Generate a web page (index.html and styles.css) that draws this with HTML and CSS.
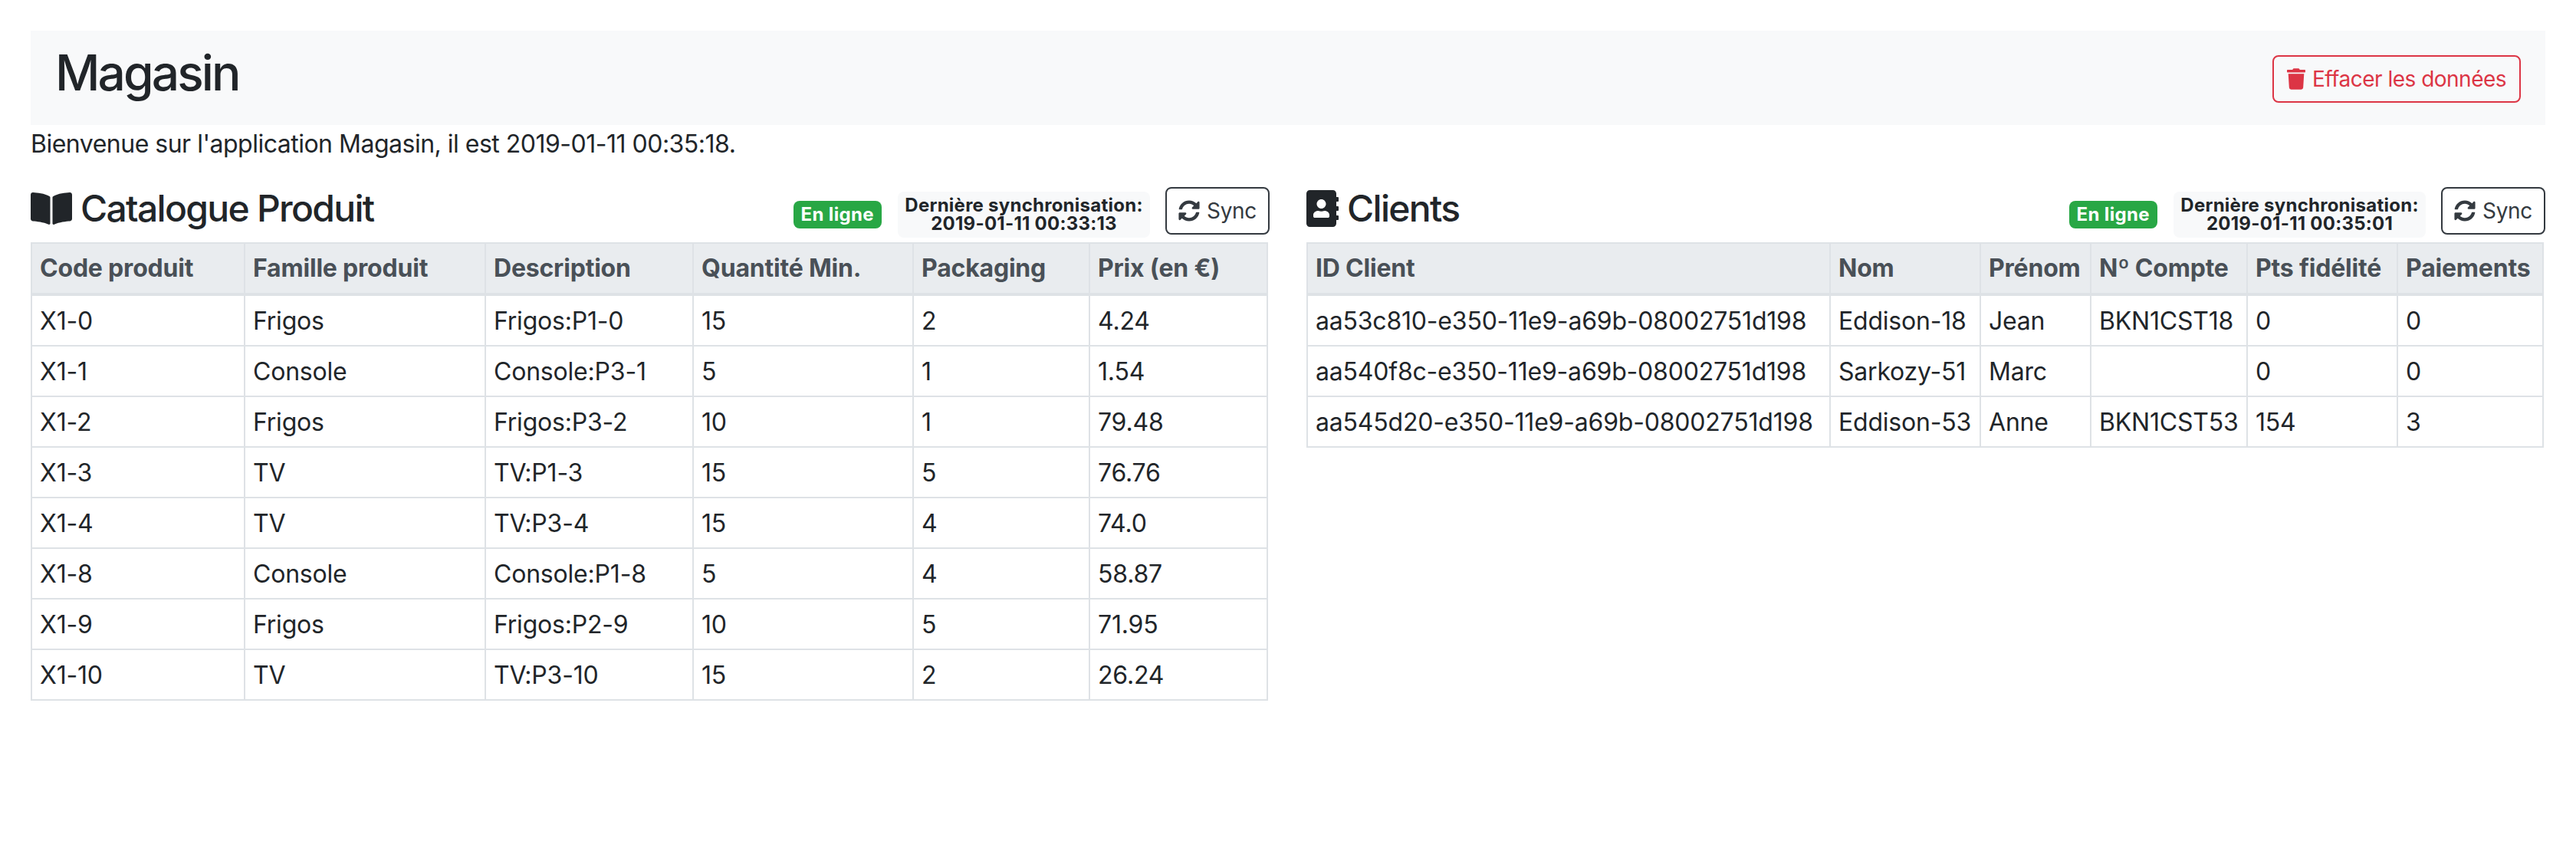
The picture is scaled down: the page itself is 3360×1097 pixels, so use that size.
FILE: index.html
```html
<!DOCTYPE html>
<html lang="fr">
<head>
    <meta charset="UTF-8">
    <meta name="viewport" content="width=device-width, initial-scale=1.0">
    <title>Magasin</title>
    <link rel="stylesheet" href="styles.css">
</head>
<body>
    <header class="topbar">
        <h1 class="brand">Magasin</h1>
        <button type="button" class="btn btn-danger">
            <svg class="icon icon-trash" viewBox="0 0 448 512"><path fill="currentColor" d="M432 32H312l-9.4-18.7A24 24 0 0 0 281.1 0H166.8a23.72 23.72 0 0 0-21.4 13.3L136 32H16A16 16 0 0 0 0 48v32a16 16 0 0 0 16 16h416a16 16 0 0 0 16-16V48a16 16 0 0 0-16-16zM53.2 467a48 48 0 0 0 47.9 45h245.8a48 48 0 0 0 47.9-45L416 128H32z"/></svg>
            Effacer les données
        </button>
    </header>
    <p class="welcome">Bienvenue sur l'application Magasin, il est 2019-01-11 00:35:18.</p>

    <main class="panels">
        <section class="panel">
            <div class="panel-head">
                <h2 class="panel-title">
                    <svg class="title-icon icon-book" viewBox="0 0 576 512"><path fill="currentColor" d="M542.22 32.05c-54.8 3.11-163.72 14.43-230.96 55.59-4.64 2.84-7.27 7.89-7.27 13.17v363.87c0 11.55 12.63 18.85 23.28 13.49 69.18-34.82 169.23-44.32 218.7-46.92 16.89-.89 30.02-14.43 30.02-30.66V62.75c.01-17.71-15.35-31.74-33.77-30.7zM264.73 87.64C197.5 46.48 88.58 35.17 33.78 32.05 15.36 31.01 0 45.04 0 62.75V400.6c0 16.24 13.13 29.78 30.02 30.66 49.49 2.6 149.59 12.11 218.77 46.95 10.62 5.35 23.21-1.94 23.21-13.46V100.63c0-5.29-2.62-10.14-7.27-12.99z"/></svg>
                    Catalogue Produit
                </h2>
                <span class="badge">En ligne</span>
                <div class="last-sync">Dernière synchronisation:<br>2019-01-11 00:33:13</div>
                <button type="button" class="btn btn-sync">
                    <svg class="icon icon-sync" viewBox="0 0 512 512"><path fill="currentColor" d="M370.72 133.28C339.458 104.008 298.888 87.962 255.848 88c-77.458.068-144.328 53.178-162.791 126.85-1.344 5.363-6.122 9.15-11.651 9.15H24.103c-7.498 0-13.194-6.807-11.807-14.176C33.933 94.924 134.813 8 256 8c66.448 0 126.791 26.136 171.315 68.685L463.03 40.97C478.149 25.851 504 36.559 504 57.941V192c0 13.255-10.745 24-24 24H345.941c-21.382 0-32.09-25.851-16.971-40.971l41.75-41.749zM32 296h134.059c21.382 0 32.09 25.851 16.971 40.971l-41.75 41.75c31.262 29.273 71.835 45.319 114.876 45.28 77.418-.07 144.315-53.144 162.787-126.849 1.344-5.363 6.122-9.15 11.651-9.15h57.304c7.498 0 13.194 6.807 11.807 14.176C478.067 417.076 377.187 504 256 504c-66.448 0-126.791-26.136-171.315-68.685L48.97 471.03C33.851 486.149 8 475.441 8 454.059V320c0-13.255 10.745-24 24-24z"/></svg>
                    Sync
                </button>
            </div>
            <table class="data-table">
                <colgroup>
                    <col class="p1"><col class="p2"><col class="p3"><col class="p4"><col class="p5"><col class="p6">
                </colgroup>
                <thead>
                    <tr><th>Code produit</th><th>Famille produit</th><th>Description</th><th>Quantité Min.</th><th>Packaging</th><th>Prix (en €)</th></tr>
                </thead>
                <tbody>
                    <tr><td>X1-0</td><td>Frigos</td><td>Frigos:P1-0</td><td>15</td><td>2</td><td>4.24</td></tr>
                    <tr><td>X1-1</td><td>Console</td><td>Console:P3-1</td><td>5</td><td>1</td><td>1.54</td></tr>
                    <tr><td>X1-2</td><td>Frigos</td><td>Frigos:P3-2</td><td>10</td><td>1</td><td>79.48</td></tr>
                    <tr><td>X1-3</td><td>TV</td><td>TV:P1-3</td><td>15</td><td>5</td><td>76.76</td></tr>
                    <tr><td>X1-4</td><td>TV</td><td>TV:P3-4</td><td>15</td><td>4</td><td>74.0</td></tr>
                    <tr><td>X1-8</td><td>Console</td><td>Console:P1-8</td><td>5</td><td>4</td><td>58.87</td></tr>
                    <tr><td>X1-9</td><td>Frigos</td><td>Frigos:P2-9</td><td>10</td><td>5</td><td>71.95</td></tr>
                    <tr><td>X1-10</td><td>TV</td><td>TV:P3-10</td><td>15</td><td>2</td><td>26.24</td></tr>
                </tbody>
            </table>
        </section>

        <section class="panel">
            <div class="panel-head">
                <h2 class="panel-title">
                    <svg class="title-icon icon-address" viewBox="0 0 448 512"><path fill="currentColor" d="M436 160c6.6 0 12-5.4 12-12v-40c0-6.6-5.4-12-12-12h-20V48c0-26.5-21.5-48-48-48H48C21.5 0 0 21.5 0 48v416c0 26.5 21.5 48 48 48h320c26.5 0 48-21.5 48-48v-48h20c6.6 0 12-5.4 12-12v-40c0-6.6-5.4-12-12-12h-20v-64h20c6.6 0 12-5.4 12-12v-40c0-6.6-5.4-12-12-12h-20v-64h20zm-228-32c35.3 0 64 28.7 64 64s-28.7 64-64 64-64-28.7-64-64 28.7-64 64-64zm112 236.8c0 10.6-10 19.2-22.4 19.2H118.4C106 384 96 375.4 96 364.8v-19.2c0-31.8 30.1-57.6 67.2-57.6h5c12.3 5.1 25.7 8 39.8 8s27.6-2.9 39.8-8h5c37.1 0 67.2 25.8 67.2 57.6v19.2z"/></svg>
                    Clients
                </h2>
                <span class="badge">En ligne</span>
                <div class="last-sync">Dernière synchronisation:<br>2019-01-11 00:35:01</div>
                <button type="button" class="btn btn-sync">
                    <svg class="icon icon-sync" viewBox="0 0 512 512"><path fill="currentColor" d="M370.72 133.28C339.458 104.008 298.888 87.962 255.848 88c-77.458.068-144.328 53.178-162.791 126.85-1.344 5.363-6.122 9.15-11.651 9.15H24.103c-7.498 0-13.194-6.807-11.807-14.176C33.933 94.924 134.813 8 256 8c66.448 0 126.791 26.136 171.315 68.685L463.03 40.97C478.149 25.851 504 36.559 504 57.941V192c0 13.255-10.745 24-24 24H345.941c-21.382 0-32.09-25.851-16.971-40.971l41.75-41.749zM32 296h134.059c21.382 0 32.09 25.851 16.971 40.971l-41.75 41.75c31.262 29.273 71.835 45.319 114.876 45.28 77.418-.07 144.315-53.144 162.787-126.849 1.344-5.363 6.122-9.15 11.651-9.15h57.304c7.498 0 13.194 6.807 11.807 14.176C478.067 417.076 377.187 504 256 504c-66.448 0-126.791-26.136-171.315-68.685L48.97 471.03C33.851 486.149 8 475.441 8 454.059V320c0-13.255 10.745-24 24-24z"/></svg>
                    Sync
                </button>
            </div>
            <table class="data-table">
                <colgroup>
                    <col class="c1"><col class="c2"><col class="c3"><col class="c4"><col class="c5"><col class="c6">
                </colgroup>
                <thead>
                    <tr><th>ID Client</th><th>Nom</th><th>Prénom</th><th>Nº Compte</th><th>Pts fidélité</th><th>Paiements</th></tr>
                </thead>
                <tbody>
                    <tr><td>aa53c810-e350-11e9-a69b-08002751d198</td><td>Eddison-18</td><td>Jean</td><td>BKN1CST18</td><td>0</td><td>0</td></tr>
                    <tr><td>aa540f8c-e350-11e9-a69b-08002751d198</td><td>Sarkozy-51</td><td>Marc</td><td></td><td>0</td><td>0</td></tr>
                    <tr><td>aa545d20-e350-11e9-a69b-08002751d198</td><td>Eddison-53</td><td>Anne</td><td>BKN1CST53</td><td>154</td><td>3</td></tr>
                </tbody>
            </table>
        </section>
    </main>
</body>
</html>
```

FILE: styles.css
```css
body {
    margin: 0;
    padding: 40px 40px 0;
    font-family: Inter, "Liberation Sans", sans-serif;
    font-size: 32px;
    line-height: 48px;
    color: #212529;
    background-color: #fff;
}
.topbar {
    display: flex;
    align-items: flex-start;
    justify-content: space-between;
    height: 123px;
    padding: 0 32px;
    background-color: #f8f9fa;
}
.brand {
    margin: 16px 0 0;
    font-size: 64px;
    line-height: 77px;
    font-weight: 500;
    letter-spacing: -2.9px;
}
.topbar .btn {
    margin-top: 32px;
}
.welcome {
    margin: 0;
    padding-top: 1px;
    letter-spacing: -0.5px;
}
.panels {
    display: flex;
    gap: 48px;
    margin-top: 32px;
}
.panel {
    flex: 0 0 1616px;
}
.panel-head {
    display: flex;
    align-items: center;
    height: 72px;
}
.panel-title {
    display: flex;
    align-items: center;
    gap: 11px;
    flex: 1;
    align-self: flex-start;
    margin: -1px 0 0;
    font-size: 48px;
    line-height: 58px;
    font-weight: 500;
    letter-spacing: -1.7px;
}
.title-icon {
    height: 48px;
    fill: #212529;
}
.icon-book {
    width: 54px;
}
.icon-address {
    width: 42px;
}
.badge {
    margin-right: 21px;
    padding: 0 10px;
    height: 36px;
    line-height: 36px;
    font-size: 24px;
    font-weight: 700;
    letter-spacing: 0.35px;
    color: #fff;
    background-color: #28a745;
    border-radius: 8px;
}
.last-sync {
    box-sizing: border-box;
    width: 329px;
    padding: 6px 0;
    margin-right: 20px;
    font-size: 24px;
    line-height: 24px;
    font-weight: 700;
    letter-spacing: 0.25px;
    text-align: center;
    background-color: #f8f9fa;
    border-radius: 8px;
}
.btn {
    display: inline-flex;
    align-items: center;
    justify-content: center;
    gap: 9px;
    height: 62px;
    padding: 0;
    font-family: inherit;
    font-size: 28px;
    background-color: transparent;
    border: 2px solid;
    border-radius: 8px;
}
.btn-danger {
    width: 324px;
    letter-spacing: -0.5px;
    color: #dc3545;
    border-color: #dc3545;
}
.btn-sync {
    align-self: flex-start;
    width: 136px;
    letter-spacing: -0.3px;
    color: #343a40;
    border-color: #343a40;
}
.icon {
    fill: currentColor;
}
.icon-trash {
    width: 24px;
    height: 28px;
}
.icon-sync {
    width: 28px;
    height: 28px;
}
.data-table {
    width: 1614px;
    table-layout: fixed;
    border-collapse: collapse;
    letter-spacing: -0.2px;
}
.data-table th, .data-table td {
    padding: 8px 10px;
    text-align: left;
    white-space: nowrap;
    border: 2px solid #dee2e6;
}
.data-table td {
    padding-top: 9px;
    padding-bottom: 7px;
}
.data-table th {
    font-weight: 700;
    color: #495057;
    background-color: #e9ecef;
    border-bottom-width: 4px;
}
.p1 { width: 278px; }
.p2 { width: 314px; }
.p3 { width: 271px; }
.p4 { width: 287px; }
.p5 { width: 230px; }
.p6 { width: 232px; }
.c1 { width: 682px; }
.c2 { width: 196px; }
.c3 { width: 144px; }
.c4 { width: 204px; }
.c5 { width: 196px; }
.c6 { width: 190px; }
```
